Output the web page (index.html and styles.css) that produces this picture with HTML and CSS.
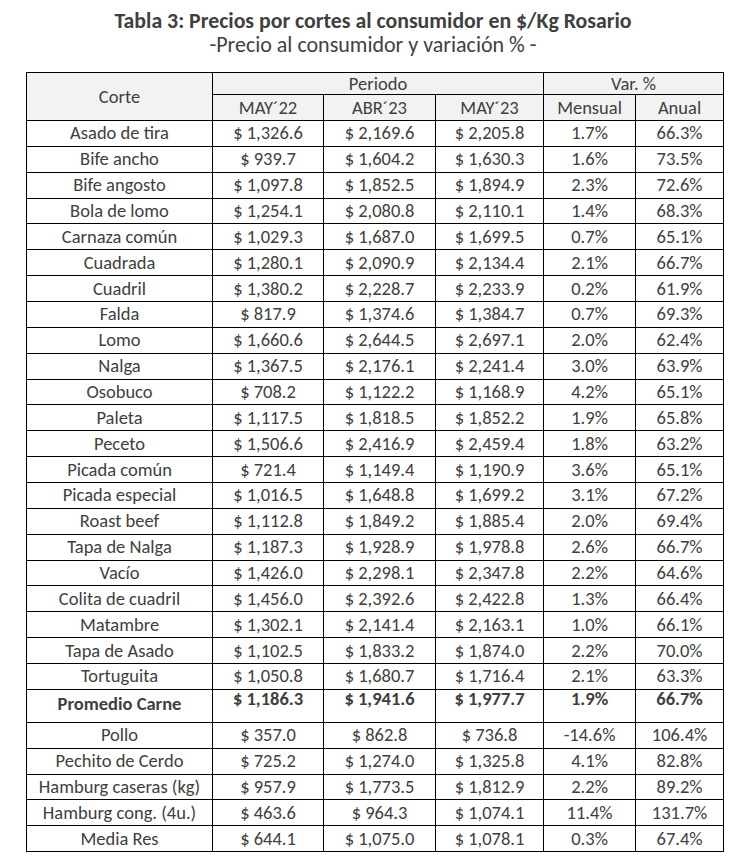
FILE: index.html
```html
<!DOCTYPE html>
<html lang="es">
<head>
<meta charset="utf-8">
<title>Tabla 3</title>
<link rel="stylesheet" href="styles.css">
</head>
<body>
<div class="page">
  <header class="heading">
    <h1 class="title">Tabla 3: Precios por cortes al consumidor en $/Kg Rosario</h1>
    <p class="subtitle">-Precio al consumidor y variación % -</p>
  </header>
  <table class="prices">
    <colgroup>
      <col class="c-name"><col class="c-p1"><col class="c-p2"><col class="c-p3"><col class="c-v1"><col class="c-v2">
    </colgroup>
    <thead>
      <tr class="h1">
        <th rowspan="2">Corte</th>
        <th colspan="3">Periodo</th>
        <th colspan="2">Var. %</th>
      </tr>
      <tr class="h2">
        <th>MAY´22</th><th>ABR´23</th><th>MAY´23</th><th>Mensual</th><th>Anual</th>
      </tr>
    </thead>
    <tbody>
      <tr><td>Asado de tira</td><td>$ 1,326.6</td><td>$ 2,169.6</td><td>$ 2,205.8</td><td>1.7%</td><td>66.3%</td></tr>
      <tr><td>Bife ancho</td><td>$ 939.7</td><td>$ 1,604.2</td><td>$ 1,630.3</td><td>1.6%</td><td>73.5%</td></tr>
      <tr><td>Bife angosto</td><td>$ 1,097.8</td><td>$ 1,852.5</td><td>$ 1,894.9</td><td>2.3%</td><td>72.6%</td></tr>
      <tr><td>Bola de lomo</td><td>$ 1,254.1</td><td>$ 2,080.8</td><td>$ 2,110.1</td><td>1.4%</td><td>68.3%</td></tr>
      <tr><td>Carnaza común</td><td>$ 1,029.3</td><td>$ 1,687.0</td><td>$ 1,699.5</td><td>0.7%</td><td>65.1%</td></tr>
      <tr><td>Cuadrada</td><td>$ 1,280.1</td><td>$ 2,090.9</td><td>$ 2,134.4</td><td>2.1%</td><td>66.7%</td></tr>
      <tr><td>Cuadril</td><td>$ 1,380.2</td><td>$ 2,228.7</td><td>$ 2,233.9</td><td>0.2%</td><td>61.9%</td></tr>
      <tr><td>Falda</td><td>$ 817.9</td><td>$ 1,374.6</td><td>$ 1,384.7</td><td>0.7%</td><td>69.3%</td></tr>
      <tr><td>Lomo</td><td>$ 1,660.6</td><td>$ 2,644.5</td><td>$ 2,697.1</td><td>2.0%</td><td>62.4%</td></tr>
      <tr><td>Nalga</td><td>$ 1,367.5</td><td>$ 2,176.1</td><td>$ 2,241.4</td><td>3.0%</td><td>63.9%</td></tr>
      <tr><td>Osobuco</td><td>$ 708.2</td><td>$ 1,122.2</td><td>$ 1,168.9</td><td>4.2%</td><td>65.1%</td></tr>
      <tr><td>Paleta</td><td>$ 1,117.5</td><td>$ 1,818.5</td><td>$ 1,852.2</td><td>1.9%</td><td>65.8%</td></tr>
      <tr><td>Peceto</td><td>$ 1,506.6</td><td>$ 2,416.9</td><td>$ 2,459.4</td><td>1.8%</td><td>63.2%</td></tr>
      <tr><td>Picada común</td><td>$ 721.4</td><td>$ 1,149.4</td><td>$ 1,190.9</td><td>3.6%</td><td>65.1%</td></tr>
      <tr><td>Picada especial</td><td>$ 1,016.5</td><td>$ 1,648.8</td><td>$ 1,699.2</td><td>3.1%</td><td>67.2%</td></tr>
      <tr><td>Roast beef</td><td>$ 1,112.8</td><td>$ 1,849.2</td><td>$ 1,885.4</td><td>2.0%</td><td>69.4%</td></tr>
      <tr><td>Tapa de Nalga</td><td>$ 1,187.3</td><td>$ 1,928.9</td><td>$ 1,978.8</td><td>2.6%</td><td>66.7%</td></tr>
      <tr><td>Vacío</td><td>$ 1,426.0</td><td>$ 2,298.1</td><td>$ 2,347.8</td><td>2.2%</td><td>64.6%</td></tr>
      <tr><td>Colita de cuadril</td><td>$ 1,456.0</td><td>$ 2,392.6</td><td>$ 2,422.8</td><td>1.3%</td><td>66.4%</td></tr>
      <tr><td>Matambre</td><td>$ 1,302.1</td><td>$ 2,141.4</td><td>$ 2,163.1</td><td>1.0%</td><td>66.1%</td></tr>
      <tr><td>Tapa de Asado</td><td>$ 1,102.5</td><td>$ 1,833.2</td><td>$ 1,874.0</td><td>2.2%</td><td>70.0%</td></tr>
      <tr><td>Tortuguita</td><td>$ 1,050.8</td><td>$ 1,680.7</td><td>$ 1,716.4</td><td>2.1%</td><td>63.3%</td></tr>
      <tr class="avg"><td class="avg-label">Promedio Carne</td><td>$ 1,186.3</td><td>$ 1,941.6</td><td>$ 1,977.7</td><td>1.9%</td><td>66.7%</td></tr>
      <tr><td>Pollo</td><td>$ 357.0</td><td>$ 862.8</td><td>$ 736.8</td><td>-14.6%</td><td>106.4%</td></tr>
      <tr><td>Pechito de Cerdo</td><td>$ 725.2</td><td>$ 1,274.0</td><td>$ 1,325.8</td><td>4.1%</td><td>82.8%</td></tr>
      <tr><td>Hamburg caseras (kg)</td><td>$ 957.9</td><td>$ 1,773.5</td><td>$ 1,812.9</td><td>2.2%</td><td>89.2%</td></tr>
      <tr><td>Hamburg cong. (4u.)</td><td>$ 463.6</td><td>$ 964.3</td><td>$ 1,074.1</td><td>11.4%</td><td>131.7%</td></tr>
      <tr><td>Media Res</td><td>$ 644.1</td><td>$ 1,075.0</td><td>$ 1,078.1</td><td>0.3%</td><td>67.4%</td></tr>
    </tbody>
  </table>
</div>
</body>
</html>
```

FILE: styles.css
```css
html, body {
  margin: 0;
  padding: 0;
  background: #ffffff;
}

.page {
  width: 746px;
  font-family: Carlito, Lato, "Open Sans", sans-serif;
  color: #404040;
}

.heading {
  text-align: center;
  padding-top: 9px;
  height: 72px;
  box-sizing: border-box;
}

.title {
  margin: 0;
  font-size: 21.8px;
  font-weight: bold;
  line-height: 24px;
}

.subtitle {
  margin: 0;
  font-size: 22px;
  font-weight: normal;
  line-height: 24px;
}

.prices {
  margin-left: 26px;
  width: 697px;
  table-layout: fixed;
  border-collapse: collapse;
  font-size: 18.5px;
}

.c-name { width: 186px; }
.c-p1 { width: 111px; }
.c-p2 { width: 112px; }
.c-p3 { width: 108px; }
.c-v1 { width: 92px; }
.c-v2 { width: 88px; }

.prices th,
.prices td {
  border: 1px solid #000000;
  padding: 0;
  text-align: center;
  vertical-align: middle;
  white-space: nowrap;
  font-weight: normal;
}

.prices th {
  background: #f2f2f2;
  line-height: 20px;
}

.h1 th {
  height: 21px;
}

.h2 th {
  height: 25px;
}

.prices tbody td {
  height: 24.86px;
  line-height: 20px;
}

.prices tbody tr.avg td {
  height: 32px;
  line-height: 18px;
  font-weight: bold;
  vertical-align: top;
  padding-top: 0;
}

.prices tbody tr.avg td.avg-label {
  height: 28px;
  line-height: 20px;
  padding-top: 4px;
}
```
